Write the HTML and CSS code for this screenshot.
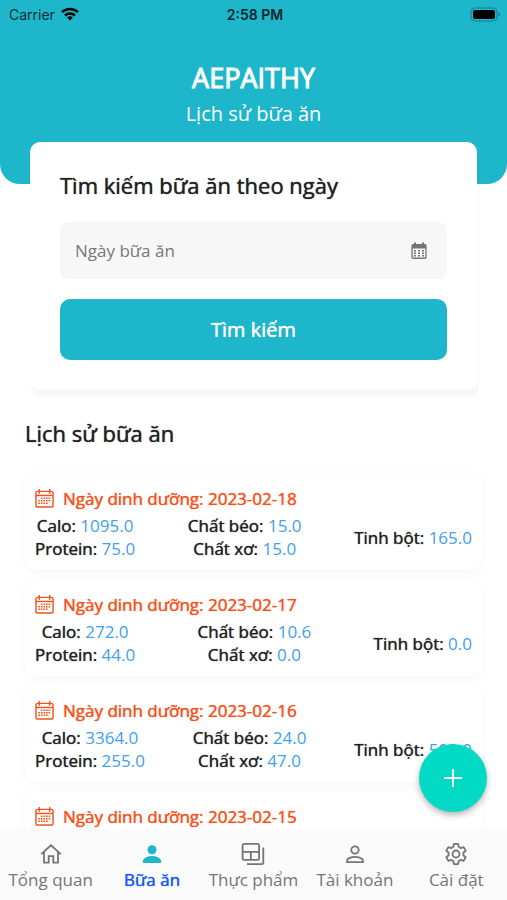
FILE: index.html
```html
<!DOCTYPE html>
<html lang="vi">
<head>
    <meta charset="UTF-8">
    <meta name="viewport" content="width=device-width, initial-scale=1.0">
    <title>AEPAITHY</title>
    <link rel="stylesheet" href="styles.css">
</head>
<body>
    <!-- shared icons -->
    <svg class="sprite" aria-hidden="true">
        <symbol id="calendar" viewBox="0 0 20 20">
            <g fill="none" stroke="currentColor" stroke-width="1.5" stroke-linejoin="round">
                <rect x="1" y="2.5" width="18" height="16.5" rx="2"/>
                <path d="M1 6.8h18" />
                <path d="M4.5 0.5v4M15.5 0.5v4" stroke-linecap="round"/>
            </g>
            <g fill="none" stroke="currentColor" stroke-width="1.6" stroke-dasharray="1.7 1">
                <path d="M6.2 9.7h10.5M3.5 12.4h13.2M3.5 15.1h10.5"/>
            </g>
        </symbol>
    </svg>

    <div class="app">
        <header class="header">
            <div class="status-bar">
                <div class="carrier">
                    <span>Carrier</span>
                    <svg width="18" height="14" viewBox="0 0 18 14">
                        <g fill="none" stroke="#000" stroke-width="2.5">
                            <path d="M1 5.2a11.5 11.5 0 0 1 16 0"/>
                            <path d="M4 8.5a7.2 7.2 0 0 1 10 0"/>
                        </g>
                        <path d="M9 13.6L6.1 10.6a4.2 4.2 0 0 1 5.8 0z"/>
                    </svg>
                </div>
                <span class="time">2:58 PM</span>
                <div class="battery">
                    <svg width="31" height="15" viewBox="0 0 31 15">
                        <rect x="1" y="1" width="26" height="13" rx="4" fill="none" stroke="#13808e"/>
                        <rect x="3" y="3" width="22" height="9" rx="2"/>
                        <path d="M28.5 5.5c2 .6 2 3.4 0 4z" fill="#13808e"/>
                    </svg>
                </div>
            </div>
            <h1>AEPAITHY</h1>
            <p class="subtitle">Lịch sử bữa ăn</p>
        </header>

        <main class="content">
            <form class="search-card">
                <h2><label for="mealDate">Tìm kiếm bữa ăn theo ngày</label></h2>
                <div class="date-field">
                    <input type="text" id="mealDate" placeholder="Ngày bữa ăn">
                    <button type="button" class="date-btn" aria-label="Ngày bữa ăn">
                        <svg width="16" height="18" viewBox="0 0 16 18">
                            <path d="M3 .5h2V2h6V.5h2V2h.8a1.800 1.800 0 0 1 1.800 1.800v11.400a1.800 1.800 0 0 1-1.800 1.800H2.200A1.800 1.800 0 0 1 .4 15.200V3.800A1.800 1.800 0 0 1 2.200 2H3zM1.700 6.500v8.200c0 .6.300.9.900.9h10.800c.6 0 .9-.3.900-.9V6.500z" fill="#757575" fill-rule="evenodd"/>
                            <path d="M3 8.800h10M3 11.300h10M3 13.800h10" stroke="#757575" stroke-width="1.500" stroke-dasharray="2 2"/>
                        </svg>
                    </button>
                </div>
                <button type="button" class="search-btn">Tìm kiếm</button>
            </form>

            <section class="history">
                <h2>Lịch sử bữa ăn</h2>

                <article class="meal">
                    <h3><svg class="meal-icon"><use href="#calendar"/></svg>Ngày dinh dưỡng: 2023-02-18</h3>
                    <div class="meal-info">
                        <div>
                            <p>Calo: <span>1095.0</span></p>
                            <p>Protein: <span>75.0</span></p>
                        </div>
                        <div>
                            <p>Chất béo: <span>15.0</span></p>
                            <p>Chất xơ: <span>15.0</span></p>
                        </div>
                        <p>Tinh bột: <span>165.0</span></p>
                    </div>
                </article>

                <article class="meal">
                    <h3><svg class="meal-icon"><use href="#calendar"/></svg>Ngày dinh dưỡng: 2023-02-17</h3>
                    <div class="meal-info">
                        <div>
                            <p>Calo: <span>272.0</span></p>
                            <p>Protein: <span>44.0</span></p>
                        </div>
                        <div>
                            <p>Chất béo: <span>10.6</span></p>
                            <p>Chất xơ: <span>0.0</span></p>
                        </div>
                        <p>Tinh bột: <span>0.0</span></p>
                    </div>
                </article>

                <article class="meal">
                    <h3><svg class="meal-icon"><use href="#calendar"/></svg>Ngày dinh dưỡng: 2023-02-16</h3>
                    <div class="meal-info">
                        <div>
                            <p>Calo: <span>3364.0</span></p>
                            <p>Protein: <span>255.0</span></p>
                        </div>
                        <div>
                            <p>Chất béo: <span>24.0</span></p>
                            <p>Chất xơ: <span>47.0</span></p>
                        </div>
                        <p>Tinh bột: <span>500.0</span></p>
                    </div>
                </article>

                <article class="meal">
                    <h3><svg class="meal-icon"><use href="#calendar"/></svg>Ngày dinh dưỡng: 2023-02-15</h3>
                </article>
            </section>
        </main>

        <button type="button" class="fab" aria-label="Thêm bữa ăn">
            <svg width="18" height="18" viewBox="0 0 18 18"><path d="M9 0v18M0 9h18" stroke="#fff" stroke-width="2"/></svg>
        </button>

        <nav class="tab-bar">
            <a href="#" class="tab">
                <svg width="24" height="24" viewBox="0 0 24 24" fill="none" stroke="currentColor" stroke-width="1.8">
                    <path d="M2.2 12.2L12 3.300l9.800 8.900M5 10.300V20.600h4.700v-6.400h4.600v6.400H19V10.300"/>
                </svg>
                Tổng quan
            </a>
            <a href="#" class="tab active">
                <svg width="24" height="24" viewBox="0 0 24 24" fill="currentColor">
                    <circle cx="12" cy="7.7" r="4.5"/>
                    <path d="M3 21v-2.200c0-3 5.500-4.700 9-4.700s9 1.700 9 4.700V21z"/>
                </svg>
                Bữa ăn
            </a>
            <a href="#" class="tab">
                <svg width="24" height="24" viewBox="0 0 24 24" fill="none" stroke="currentColor" stroke-width="1.8">
                    <rect x="1.6" y="1.9" width="16.5" height="16" rx="1.5"/>
                    <path d="M1.600 9.900h16.500M9.850 9.900v8M22.300 5.500v15.200a1.500 1.500 0 0 1-1.500 1.500H6"/>
                </svg>
                Thực phẩm
            </a>
            <a href="#" class="tab">
                <svg width="24" height="24" viewBox="0 0 24 24" fill="none" stroke="currentColor" stroke-width="1.8">
                    <circle cx="12" cy="8" r="3.7"/>
                    <path d="M4 20.200v-1.500c0-2.300 4.600-3.800 8-3.800s8 1.500 8 3.800v1.500z" stroke-linejoin="round"/>
                </svg>
                Tài khoản
            </a>
            <a href="#" class="tab">
                <svg width="24" height="24" viewBox="0 0 24 24" fill="none" stroke="currentColor" stroke-width="1.8" stroke-linejoin="round">
                    <circle cx="12" cy="12" r="3.5"/>
                    <path d="M9.900 1.900h4.200l.6 3 2 1.200 2.900-1 2.100 3.600-2.300 2v2.600l2.300 2-2.100 3.600-2.900-1-2 1.200-.6 3H9.900l-.6-3-2-1.200-2.900 1-2.100-3.600 2.300-2v-2.600l-2.300-2 2.100-3.600 2.900 1 2-1.200z"/>
                </svg>
                Cài đặt
            </a>
        </nav>
    </div>
</body>
</html>
```

FILE: styles.css
```css
* {
    margin: 0;
    padding: 0;
    box-sizing: border-box;
    font-family: 'Open Sans', 'Noto Sans', sans-serif;
}

body {
    background: #fff;
    color: #222;
}

button {
    border: none;
    cursor: pointer;
}

.sprite {
    display: none;
}

.app {
    position: relative;
    display: flex;
    flex-direction: column;
    height: 100vh;
    overflow: hidden;
}

.header {
    flex-shrink: 0;
    padding-bottom: 56px;
    background: #1eb6ca;
    border-radius: 0 0 20px 20px;
    color: #fff;
    text-align: center;
}

.status-bar {
    display: grid;
    grid-template-columns: 1fr auto 1fr;
    align-items: center;
    height: 28px;
    padding: 0 6px 0 9px;
    color: #0b2f35;
}

.status-bar span {
    font-family: Inter, sans-serif;
    font-size: 14px;
}

.status-bar .time {
    font-weight: 600;
    color: #06262b;
}

.carrier {
    display: flex;
    align-items: center;
    gap: 6px;
}

.battery {
    display: flex;
    justify-content: flex-end;
}

h1 {
    margin-top: 32px;
    font-size: 27px;
    font-weight: 400;
    line-height: 36px;
    -webkit-text-stroke: 1px;
}

.subtitle {
    margin-top: 4px;
    font-size: 20px;
    line-height: 28px;
}

.content {
    flex: 1;
    min-height: 0;
    margin-top: -42px;
    overflow-y: auto;
    scrollbar-width: none;
}

.search-card {
    margin: 0 30px;
    padding: 28px 30px 30px;
    background: #fff;
    border-radius: 10px;
    box-shadow: 2px 8px 3px rgba(0, 0, 0, 0.03);
}

h2 {
    font-size: 22px;
    font-weight: 400;
    line-height: 30px;
    text-shadow: 0 0 1px currentColor;
}

.date-field {
    display: flex;
    align-items: center;
    height: 57px;
    margin: 22px 0 20px;
    padding: 0 20px 0 15px;
    background: #f7f7f7;
    border-radius: 8px;
}

.date-field input {
    flex: 1;
    min-width: 0;
    border: none;
    outline: none;
    background: none;
    font-size: 17px;
    color: #222;
}

.date-field input::placeholder {
    color: #777;
}

.date-btn {
    display: flex;
    background: none;
}

.search-btn {
    display: block;
    width: 100%;
    height: 61px;
    background: #1eb6ca;
    border-radius: 10px;
    color: #fff;
    font-size: 20px;
    text-shadow: 0 0 1px currentColor;
}

.history {
    padding: 28px 25px 0;
}

.history h2 {
    margin-bottom: 25px;
}

.meal {
    margin-bottom: 9px;
    padding: 10px;
    border-radius: 12px;
    background: #fff;
    box-shadow: 0 2px 8px rgba(0, 0, 30, 0.04);
}

.meal h3 {
    display: flex;
    align-items: center;
    gap: 9px;
    height: 31px;
    color: #f4511e;
    font-size: 17px;
    font-weight: 400;
    text-shadow: 0 0 1px currentColor;
}

.meal-icon {
    width: 19px;
    height: 19px;
}

.meal-info {
    display: flex;
    justify-content: space-between;
    align-items: center;
    text-align: center;
    font-size: 17px;
    line-height: 23px;
    text-shadow: 0 0 1px currentColor;
}

.meal-info span {
    color: #42a0ee;
    text-shadow: none;
}

.fab {
    position: absolute;
    right: 20px;
    bottom: 88px;
    display: flex;
    justify-content: center;
    align-items: center;
    width: 68px;
    height: 68px;
    border-radius: 50%;
    background: #03dac6;
    box-shadow: 0 3px 6px rgba(0, 0, 0, 0.3);
}

.tab-bar {
    display: grid;
    grid-template-columns: repeat(5, 1fr);
    flex-shrink: 0;
    height: 71px;
    padding-top: 13px;
    background: #fafafa;
}

.tab {
    display: flex;
    flex-direction: column;
    align-items: center;
    gap: 2px;
    color: #757575;
    font-size: 17px;
    line-height: 24px;
    text-decoration: none;
    white-space: nowrap;
}

.tab.active {
    color: #1a56f0;
    text-shadow: 0 0 1px currentColor;
}

.tab.active svg {
    color: #1eb6ca;
}
```
